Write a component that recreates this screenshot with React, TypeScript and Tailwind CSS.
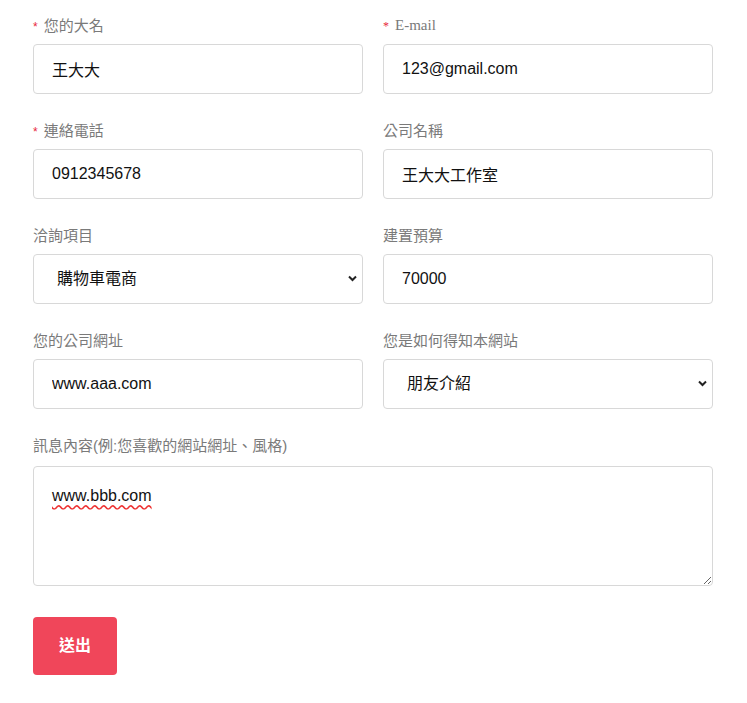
import { ReactNode } from 'react'

const FONT = "font-['Liberation_Sans','Noto_Sans_CJK_TC',sans-serif]"

type FieldProps = {
  label: string
  required?: boolean
  serif?: boolean
  children: ReactNode
}

function Field({ label, required, serif, children }: FieldProps) {
  return (
    <div className="flex flex-col">
      <label
        className={`mb-[8px] h-[21px] text-[15px] leading-[21px] text-[#7a7a7a] ${
          serif ? "font-['Liberation_Serif',serif] text-[14px]" : ''
        }`}>
        {required && <span className="mr-[6px] text-[12px] text-[#e8283c]">*</span>}
        {label}
      </label>
      {children}
    </div>
  )
}

function TextInput({ value }: { value: string }) {
  return (
    <input
      readOnly
      value={value}
      className="h-[50px] w-full rounded-[4px] border border-[#d8d8d8] bg-white px-[18px] text-[16px] text-[#111] outline-none"
    />
  )
}

function Select({ value, options }: { value: string; options: string[] }) {
  return (
    <div className="relative">
      <select
        defaultValue={value}
        className="h-[50px] w-full appearance-none rounded-[4px] border border-[#d8d8d8] bg-white pl-[23px] pr-[30px] text-[16px] text-[#111] outline-none">
        {options.map((o) => (
          <option key={o}>{o}</option>
        ))}
      </select>
      <svg
        className="pointer-events-none absolute right-[6px] top-[21px]"
        width="9"
        height="7"
        viewBox="0 0 9 7">
        <path d="M1 1.5 L4.5 5 L8 1.5" stroke="#222" strokeWidth="2" fill="none" />
      </svg>
    </div>
  )
}

export default function App() {
  return (
    <div className={`min-h-[703px] bg-white px-[33px] pt-[15px] ${FONT}`}>
      <div className="grid w-[680px] grid-cols-2 gap-x-[20px] gap-y-[26px]">
        <Field label="您的大名" required>
          <TextInput value="王大大" />
        </Field>
        <Field label="E-mail" required serif>
          <TextInput value="123@gmail.com" />
        </Field>
        <Field label="連絡電話" required>
          <TextInput value="0912345678" />
        </Field>
        <Field label="公司名稱">
          <TextInput value="王大大工作室" />
        </Field>
        <Field label="洽詢項目">
          <Select value="購物車電商" options={['形象網站', '購物車電商', '客製化系統']} />
        </Field>
        <Field label="建置預算">
          <TextInput value="70000" />
        </Field>
        <Field label="您的公司網址">
          <TextInput value="www.aaa.com" />
        </Field>
        <Field label="您是如何得知本網站">
          <Select value="朋友介紹" options={['搜尋引擎', '朋友介紹', '其他']} />
        </Field>
        <div className="col-span-2">
          <Field label="訊息內容(例:您喜歡的網站網址、風格)">
            <textarea
              readOnly
              value="www.bbb.com"
              className="mt-[2px] h-[120px] w-full rounded-[4px] border border-[#d8d8d8] bg-white px-[18px] py-[17px] text-[16px] text-[#111] underline decoration-[#e33] decoration-wavy underline-offset-[3px] outline-none"
            />
          </Field>
        </div>
      </div>
      <button className="mt-[31px] h-[58px] w-[84px] rounded-[4px] bg-[#f0465a] text-[16px] font-bold text-white">
        送出
      </button>
    </div>
  )
}
